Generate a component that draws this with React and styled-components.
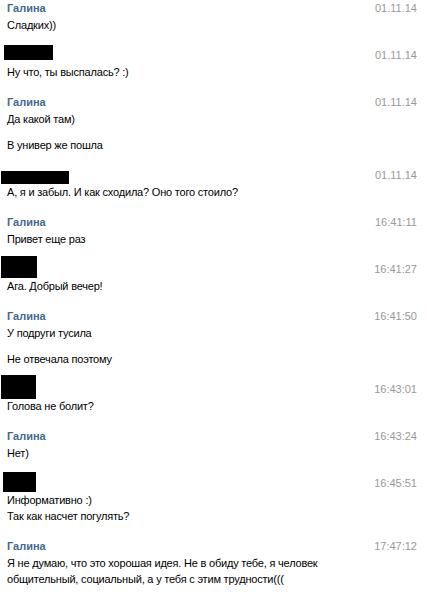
import React from "react";
import styled, { createGlobalStyle } from "styled-components";

const Global = createGlobalStyle`
  html, body { margin: 0; padding: 0; background: #fff; }
  body { font-family: "Liberation Sans", Arial, sans-serif; font-size: 11px; color: #000; }
`;

const Page = styled.div`
  width: 427px;
  padding: 0 10px 0 6px;
  box-sizing: border-box;
  display: flex;
  flex-direction: column;
  gap: 14px;
`;

const Block = styled.div`
  display: flex;
  flex-direction: column;
`;

const Header = styled.div`
  position: relative;
  display: flex;
  justify-content: space-between;
  align-items: center;
  height: 16px;
  line-height: 16px;
  margin-bottom: 1px;
`;

const Name = styled.span`
  font-weight: bold;
  color: #45688e;
  padding-left: 1px;
`;

const Time = styled.span`
  color: #999999;
`;

const Censor = styled.span`
  position: absolute;
  background: #000;
  left: ${(p) => p.$x - 6}px;
  top: ${(p) => p.$y}px;
  width: ${(p) => p.$w}px;
  height: ${(p) => p.$h}px;
`;

const Messages = styled.div`
  display: flex;
  flex-direction: column;
  gap: 10px;
  max-width: 345px;
`;

const Text = styled.div`
  line-height: 16px;
  padding-left: 1px;
  letter-spacing: -0.2px;
`;

const data = [
  { name: "Галина", time: "01.11.14", msgs: ["Сладких))"] },
  { box: { x: 4, y: -2, w: 49, h: 15 }, time: "01.11.14", msgs: ["Ну что, ты выспалась? :)"] },
  { name: "Галина", time: "01.11.14", msgs: ["Да какой там)", "В универ же пошла"] },
  { box: { x: 1, y: 4, w: 68, h: 13 }, time: "01.11.14", msgs: ["А, я и забыл. И как сходила? Оно того стоило?"] },
  { name: "Галина", time: "16:41:11", msgs: ["Привет еще раз"] },
  { box: { x: 1, y: -5, w: 36, h: 22 }, time: "16:41:27", msgs: ["Ага. Добрый вечер!"] },
  { name: "Галина", time: "16:41:50", msgs: ["У подруги тусила", "Не отвечала поэтому"] },
  { box: { x: 1, y: -6, w: 35, h: 24 }, time: "16:43:01", msgs: ["Голова не болит?"] },
  { name: "Галина", time: "16:43:24", msgs: ["Нет)"] },
  { box: { x: 3, y: -3, w: 33, h: 20 }, time: "16:45:51", msgs: [["Информативно :)", "Так как насчет погулять?"]] },
  {
    name: "Галина",
    time: "17:47:12",
    msgs: ["Я не думаю, что это хорошая идея. Не в обиду тебе, я человек общительный, социальный, а у тебя с этим трудности((("],
  },
];

export default function App() {
  return (
    <>
      <Global />
      <Page>
        {data.map((b, i) => (
          <Block key={i}>
            <Header>
              <Name>{b.name || "\u00a0"}</Name>
              {b.box && <Censor $x={b.box.x} $y={b.box.y} $w={b.box.w} $h={b.box.h} />}
              <Time>{b.time}</Time>
            </Header>
            <Messages>
              {b.msgs.map((m, j) => (
                <Text key={j}>
                  {Array.isArray(m)
                    ? m.map((l, k) => (
                        <React.Fragment key={k}>
                          {k > 0 && <br />}
                          {l}
                        </React.Fragment>
                      ))
                    : m}
                </Text>
              ))}
            </Messages>
          </Block>
        ))}
      </Page>
    </>
  );
}
